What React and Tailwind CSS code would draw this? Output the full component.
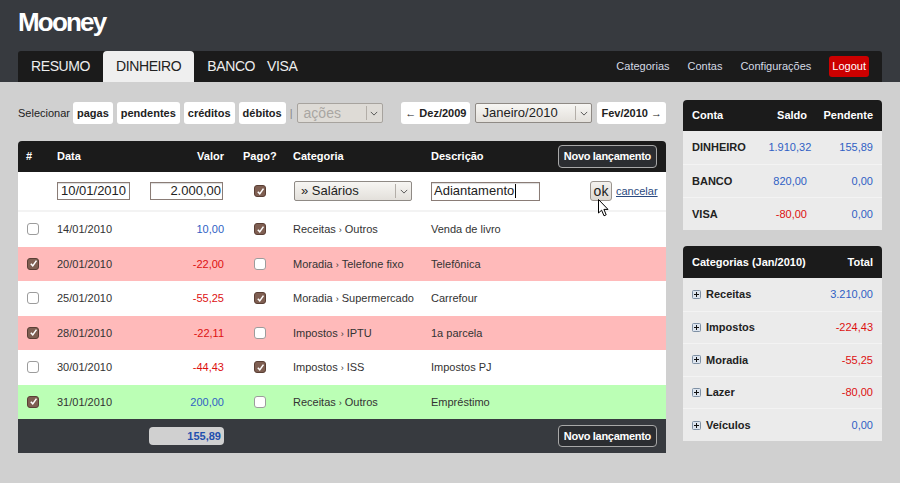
import React from 'react'

const entries = [
  { date: '14/01/2010', value: '10,00', neg: false, paid: true, sel: false, cat: ['Receitas', 'Outros'], desc: 'Venda de livro', tone: 'bg-white' },
  { date: '20/01/2010', value: '-22,00', neg: true, paid: false, sel: true, cat: ['Moradia', 'Telefone fixo'], desc: 'Telefônica', tone: 'bg-[#ffbaba]' },
  { date: '25/01/2010', value: '-55,25', neg: true, paid: true, sel: false, cat: ['Moradia', 'Supermercado'], desc: 'Carrefour', tone: 'bg-white' },
  { date: '28/01/2010', value: '-22,11', neg: true, paid: false, sel: true, cat: ['Impostos', 'IPTU'], desc: '1a parcela', tone: 'bg-[#ffbaba]' },
  { date: '30/01/2010', value: '-44,43', neg: true, paid: true, sel: false, cat: ['Impostos', 'ISS'], desc: 'Impostos PJ', tone: 'bg-white' },
  { date: '31/01/2010', value: '200,00', neg: false, paid: false, sel: true, cat: ['Receitas', 'Outros'], desc: 'Empréstimo', tone: 'bg-[#bbffb5]' },
]

const accounts = [
  { name: 'DINHEIRO', saldo: '1.910,32', pend: '155,89', neg: false },
  { name: 'BANCO', saldo: '820,00', pend: '0,00', neg: false },
  { name: 'VISA', saldo: '-80,00', pend: '0,00', neg: true },
]

const categories = [
  { name: 'Receitas', total: '3.210,00', neg: false },
  { name: 'Impostos', total: '-224,43', neg: true },
  { name: 'Moradia', total: '-55,25', neg: true },
  { name: 'Lazer', total: '-80,00', neg: true },
  { name: 'Veículos', total: '0,00', neg: false },
]

const BLUE = 'text-[#2f5fc4]'
const RED = 'text-[#dd1111]'

function Check({ on }) {
  if (!on) return <span className="block h-[12px] w-[12px] rounded-[3px] border border-[#9c9c9c] bg-white" />
  return (
    <span className="flex h-[12px] w-[12px] items-center justify-center rounded-[3px] border border-[#5a3f35] bg-[#7f5f52]">
      <svg viewBox="0 0 10 10" className="h-[9px] w-[9px]">
        <path d="M2 5.2 L4.2 7.6 L8.3 1.8" fill="none" stroke="white" strokeWidth="1.7" />
      </svg>
    </span>
  )
}

function Chevron() {
  return (
    <svg viewBox="0 0 10 6" className="h-[5px] w-[8px]">
      <path d="M1 1 L5 5 L9 1" fill="none" stroke="#555" strokeWidth="1.2" />
    </svg>
  )
}

function FakeSelect({ label, className, disabled }) {
  return (
    <div
      className={`flex items-stretch rounded-[2px] border text-[13px] ${
        disabled ? 'border-[#a7a39e] bg-[#dedbd6] text-[#a9a6a2]' : 'border-[#8f8a85] bg-gradient-to-b from-[#f7f6f3] to-[#e3e0db] text-[#222]'
      } ${className}`}
    >
      <span className="flex flex-1 items-center pl-[6px] whitespace-nowrap">{label}</span>
      <span className="my-[2px] flex w-[16px] items-center justify-center border-l border-[#b3aea8]">
        <Chevron />
      </span>
    </div>
  )
}

function Pill({ children }) {
  return <span className="rounded-[3px] bg-white px-[4px] py-[3px] text-[11px] font-bold text-[#222]">{children}</span>
}

function NovoButton() {
  return (
    <span className="rounded-[4px] border border-[#a8a8a8] bg-[#2b2d31] px-[5px] py-[2px] text-[11px] font-bold tracking-[-0.3px] text-white">
      Novo lançamento
    </span>
  )
}

function Plus() {
  return (
    <svg width="9" height="9" viewBox="0 0 9 9">
      <rect x="0.5" y="0.5" width="8" height="8" rx="1" fill="#dce4ee" stroke="#7f90a4" />
      <path d="M2 4.5h5M4.5 2v5" stroke="#111" strokeWidth="1" />
    </svg>
  )
}

function Cursor() {
  return (
    <svg viewBox="0 0 11 18" className="absolute left-[598px] top-[199px] h-[18px] w-[11px]">
      <path d="M0.5 0.5 L0.5 14 L3.6 11.2 L6 16.8 L8.2 15.8 L5.9 10.4 L10 10.4 Z" fill="white" stroke="black" strokeWidth="1" strokeLinejoin="round" />
    </svg>
  )
}

export default function App() {
  return (
    <div className="relative min-h-[483px] bg-[#d0d0d0] font-['Liberation_Sans',Arial,sans-serif] text-[#333]">
      <header className="bg-[#373a3f] px-[18px]">
        <div className="h-[51px] pt-[7px]">
          <h1 className="text-[26px] leading-[30px] font-bold tracking-[-1.8px] text-white">Mooney</h1>
        </div>
        <nav className="flex h-[31px] items-stretch justify-between rounded-t-[3px] bg-[#1b1b1b] text-[14px] tracking-[-0.4px]">
          <div className="flex items-stretch">
            <span className="flex items-center px-[13px] text-[#eee]">RESUMO</span>
            <span className="flex items-center rounded-t-[4px] bg-[#efefef] px-[13px] text-[#222]">DINHEIRO</span>
            <span className="flex items-center pl-[13px] pr-[12px] text-[#eee]">BANCO</span>
            <span className="flex items-center text-[#eee]">VISA</span>
          </div>
          <div className="flex items-center gap-[18px] pr-[13px] text-[11px] tracking-normal text-[#d5dae4]">
            <span>Categorias</span>
            <span>Contas</span>
            <span>Configurações</span>
            <span className="rounded-[3px] bg-[#cc0000] px-[3px] py-[2px] text-white">Logout</span>
          </div>
        </nav>
      </header>

      <div className="flex gap-[17px] px-[18px] pb-[30px]">
        <main className="w-[648px]">
          <div className="flex h-[59px] items-center justify-between pt-[3px] text-[11px]">
            <div className="flex items-center gap-[4px]">
              <span className="mr-[-1px] text-[#222]">Selecionar</span>
              <Pill>pagas</Pill>
              <Pill>pendentes</Pill>
              <Pill>créditos</Pill>
              <Pill>débitos</Pill>
              <span className="text-[#888]">|</span>
              <FakeSelect label="ações" disabled className="h-[20px] w-[86px] text-[14px]" />
            </div>
            <div className="flex items-center gap-[5px]">
              <Pill>
                <span className="font-normal">←</span> Dez/2009
              </Pill>
              <FakeSelect label="Janeiro/2010" className="h-[20px] w-[117px] text-[13.5px]" />
              <Pill>
                Fev/2010 <span className="font-normal">→</span>
              </Pill>
            </div>
          </div>

          <div className="overflow-hidden rounded-t-[4px] text-[11px]">
            <div className="grid h-[31px] grid-cols-[39px_93px_74px_69px_138px_1fr] items-center bg-[#1b1b1b] font-bold text-white">
              <span className="pl-[8px]">#</span>
              <span>Data</span>
              <span className="text-right">Valor</span>
              <span className="pl-[19px]">Pago?</span>
              <span>Categoria</span>
              <span className="flex items-center justify-between pr-[9px]">
                Descrição
                <NovoButton />
              </span>
            </div>

            <div className="grid h-[40px] grid-cols-[39px_93px_74px_69px_138px_1fr] items-center border-b-2 border-[#f3f3f3] bg-white text-[13px] text-[#222]">
              <span />
              <span className="flex h-[18px] w-[73px] items-center border border-[#8a7c76] pl-[3px] shadow-[inset_0_1px_1px_rgba(0,0,0,0.15)]">10/01/2010</span>
              <span className="flex h-[18px] w-[73px] items-center justify-end border border-[#8a7c76] pr-[1px] shadow-[inset_0_1px_1px_rgba(0,0,0,0.15)]">2.000,00</span>
              <span className="pl-[30px]">
                <Check on />
              </span>
              <span className="pl-px">
                <FakeSelect label="» Salários" className="h-[20px] w-[118px] text-[13.5px]" />
              </span>
              <span className="flex items-center">
                <span className="flex h-[19px] w-[109px] items-center border border-[#8a7c76] pl-[2px] shadow-[inset_0_1px_1px_rgba(0,0,0,0.15)]">
                  Adiantamento<span className="ml-px inline-block h-[14px] w-px bg-black" />
                </span>
                <span className="ml-[50px] flex h-[20px] w-[22px] items-center justify-center rounded-[3px] border border-[#9a948e] bg-gradient-to-b from-[#f4f2ef] to-[#dcd8d3] text-[14px]">ok</span>
                <span className="ml-[4px] text-[11px] text-[#2b4a80] underline">cancelar</span>
              </span>
            </div>

            {entries.map((e) => (
              <div
                key={e.date}
                className={`grid h-[34.5px] grid-cols-[39px_93px_74px_69px_138px_1fr] items-center ${e.tone} text-[#333]`}
              >
                <span className="pl-[9px]">
                  <Check on={e.sel} />
                </span>
                <span>{e.date}</span>
                <span className={`text-right ${e.neg ? RED : BLUE}`}>{e.value}</span>
                <span className="pl-[30px]">
                  <Check on={e.paid} />
                </span>
                <span className="whitespace-nowrap">
                  {e.cat[0]}
                  <span className="mx-[3px] text-[9px]">›</span>
                  {e.cat[1]}
                </span>
                <span>{e.desc}</span>
              </div>
            ))}

            <div className="grid h-[34px] grid-cols-[39px_93px_74px_69px_138px_1fr] items-center bg-[#373a3f]">
              <span />
              <span />
              <span className="-ml-px flex h-[18px] items-center justify-end rounded-[4px] bg-[#d0d0d0] pr-[3px] font-bold text-[#1f4fae]">155,89</span>
              <span />
              <span />
              <span className="flex justify-end pr-[9px]">
                <NovoButton />
              </span>
            </div>
          </div>
        </main>

        <aside className="flex w-[199px] flex-col gap-[16px] pt-[18px] text-[11px]">
          <div className="overflow-hidden rounded-t-[4px] bg-[#ebebeb]">
            <div className="flex h-[31px] items-center bg-[#1b1b1b] px-[9px] font-bold text-white">
              <span className="flex-1">Conta</span>
              <span className="w-[70px] text-right">Saldo</span>
              <span className="w-[66px] text-right">Pendente</span>
            </div>
            {accounts.map((a, i) => (
              <div key={a.name} className={`flex h-[33px] items-center px-[9px] ${i ? 'border-t border-[#f3f3f3]' : ''}`}>
                <span className="flex-1 whitespace-nowrap font-bold text-[#222]">{a.name}</span>
                <span className={`w-[70px] text-right ${a.neg ? RED : BLUE}`}>{a.saldo}</span>
                <span className={`w-[66px] text-right ${BLUE}`}>{a.pend}</span>
              </div>
            ))}
          </div>

          <div className="overflow-hidden rounded-t-[4px] bg-[#ebebeb]">
            <div className="flex h-[32px] items-center justify-between bg-[#1b1b1b] px-[9px] font-bold text-white">
              <span>Categorias (Jan/2010)</span>
              <span>Total</span>
            </div>
            {categories.map((c, i) => (
              <div key={c.name} className={`flex h-[32.6px] items-center justify-between px-[9px] ${i ? 'border-t border-[#f3f3f3]' : ''}`}>
                <span className="flex items-center gap-[5px] font-bold text-[#222]">
                  <Plus />
                  {c.name}
                </span>
                <span className={c.neg ? RED : BLUE}>{c.total}</span>
              </div>
            ))}
          </div>
        </aside>
      </div>

      <Cursor />
    </div>
  )
}
